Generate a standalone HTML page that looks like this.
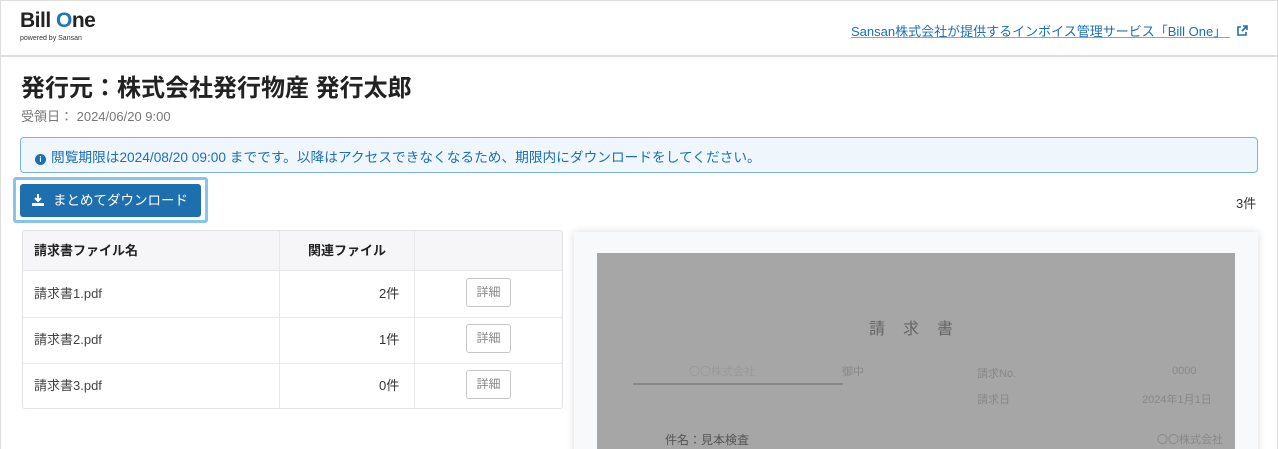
<!DOCTYPE html>
<html><head><meta charset="utf-8"><style>
*{box-sizing:border-box;margin:0;padding:0}
html,body{width:1278px;height:449px;overflow:hidden}
body{background:#fff;font-family:"Liberation Sans","Noto Sans CJK JP",sans-serif;color:#222;position:relative}
.a{position:absolute;white-space:nowrap}
</style></head><body>
<div class="a" style="left:0;top:0;width:1278px;height:460px;border:1px solid #ddd"></div>
<div class="a" style="left:0;top:0;width:1278px;height:57px;border:1px solid #ddd;border-bottom:2px solid #ddd;background:#fff"></div>
<div class="a" style="left:20px;top:9px;font-size:21px;font-weight:bold;letter-spacing:-0.5px;color:#222">Bill <span style="color:#1b74c4">O</span>ne</div>
<div class="a" style="left:20px;top:35px;font-size:7px;color:#333">powered by Sansan</div>
<div class="a" style="left:851px;top:21px;font-size:13px;color:#1d6fb4;text-decoration:underline;text-decoration-color:#6aaedf">Sansan株式会社が提供するインボイス管理サービス「Bill One」 <svg width="12" height="12" viewBox="0 0 12 12" style="vertical-align:-1px;margin-left:6px"><path d="M5 2H2v8h8V7" fill="none" stroke="#1d6fb4" stroke-width="1.6"/><path d="M6 6l5-5M7 1h4v4" fill="none" stroke="#1d6fb4" stroke-width="1.6"/></svg></div>
<div class="a" style="left:21px;top:68px;font-size:24px;font-weight:bold;color:#222">発行元：株式会社発行物産 発行太郎</div>
<div class="a" style="left:21px;top:106px;font-size:13px;color:#777">受領日： 2024/06/20 9:00</div>
<div class="a" style="left:20px;top:137px;width:1238px;height:36px;border:1px solid #7ab4df;border-radius:4px;background:#f0f7fc"></div>
<div class="a" style="left:35px;top:146px;font-size:13.7px;color:#1d6fb4"><span style="display:inline-block;width:11px;height:11px;border-radius:50%;background:#1d6fb4;color:#fff;font-size:8px;text-align:center;line-height:11px;font-weight:bold;vertical-align:0px;margin-right:5px">i</span>閲覧期限は2024/08/20 09:00 までです。以降はアクセスできなくなるため、期限内にダウンロードをしてください。</div>
<div class="a" style="left:13px;top:177px;width:195px;height:46px;border:3px solid #86c4ec;border-radius:3px"></div>
<div class="a" style="left:20px;top:184px;width:181px;height:33px;background:#1d6fae;border-radius:3px;color:#fff;font-size:13.5px;line-height:33px;padding-left:12px"><svg width="12" height="12" viewBox="0 0 12 12" style="vertical-align:-1px;margin-right:9px"><path d="M6 0v7M3 4l3 3 3-3" fill="none" stroke="#fff" stroke-width="2"/><rect x="0" y="9" width="12" height="3" fill="#fff"/></svg>まとめてダウンロード</div>
<div class="a" style="left:1236px;top:193px;font-size:13px;color:#333">3件</div>
<div class="a" style="left:22px;top:230px;width:541px;height:179px;border:1px solid #e2e2e6;border-radius:3px;overflow:hidden;font-size:13px">
<div style="height:40px;background:#f6f6f9;border-bottom:1px solid #e8e8ec;font-weight:bold;position:relative">
<span class="a" style="left:11px;top:9px">請求書ファイル名</span><span class="a" style="left:285px;top:9px">関連ファイル</span></div>
<div class="a" style="left:256px;top:0;width:1px;height:179px;background:#e8e8ec"></div>
<div class="a" style="left:391px;top:0;width:1px;height:179px;background:#e8e8ec"></div>
<div class="a" style="left:0;top:86px;width:541px;height:1px;background:#e8e8ec"></div>
<div class="a" style="left:0;top:132px;width:541px;height:1px;background:#e8e8ec"></div>
<span class="a" style="left:11px;top:52px;color:#444">請求書1.pdf</span><span class="a" style="left:356px;top:52px;color:#333">2件</span>
<span class="a" style="left:11px;top:98px;color:#444">請求書2.pdf</span><span class="a" style="left:356px;top:98px;color:#333">1件</span>
<span class="a" style="left:11px;top:144px;color:#444">請求書3.pdf</span><span class="a" style="left:356px;top:144px;color:#333">0件</span>
<div class="a" style="left:443px;top:47px;width:45px;height:29px;border:1px solid #c6c6c6;border-radius:3px;font-size:12px;color:#888;text-align:center;line-height:27px">詳細</div>
<div class="a" style="left:443px;top:93px;width:45px;height:29px;border:1px solid #c6c6c6;border-radius:3px;font-size:12px;color:#888;text-align:center;line-height:27px">詳細</div>
<div class="a" style="left:443px;top:139px;width:45px;height:29px;border:1px solid #c6c6c6;border-radius:3px;font-size:12px;color:#888;text-align:center;line-height:27px">詳細</div>
</div>
<div class="a" style="left:574px;top:232px;width:684px;height:230px;background:#f8f9fb;box-shadow:0 0 8px rgba(0,0,0,.15)"></div>
<div class="a" style="left:597px;top:253px;width:638px;height:210px;background:#a6a6a6;color:#888;font-size:11px">
<div class="a" style="left:272px;top:62px;font-size:16px;color:#666;letter-spacing:18px">請求書</div>
<div class="a" style="left:92px;top:110px;color:#999">〇〇株式会社</div>
<div class="a" style="left:245px;top:110px">御中</div>
<div class="a" style="left:36px;top:130px;width:210px;height:2px;background:#888"></div>
<div class="a" style="left:380px;top:112px">請求No.</div><div class="a" style="left:575px;top:112px">0000</div>
<div class="a" style="left:380px;top:138px">請求日</div><div class="a" style="left:545px;top:138px">2024年1月1日</div>
<div class="a" style="left:68px;top:178px;color:#555;font-size:12px">件名：見本検査</div>
<div class="a" style="left:560px;top:178px">〇〇株式会社</div>
<div class="a" style="left:36px;top:196px;width:290px;height:2px;background:#888"></div>
</div>
</body></html>
